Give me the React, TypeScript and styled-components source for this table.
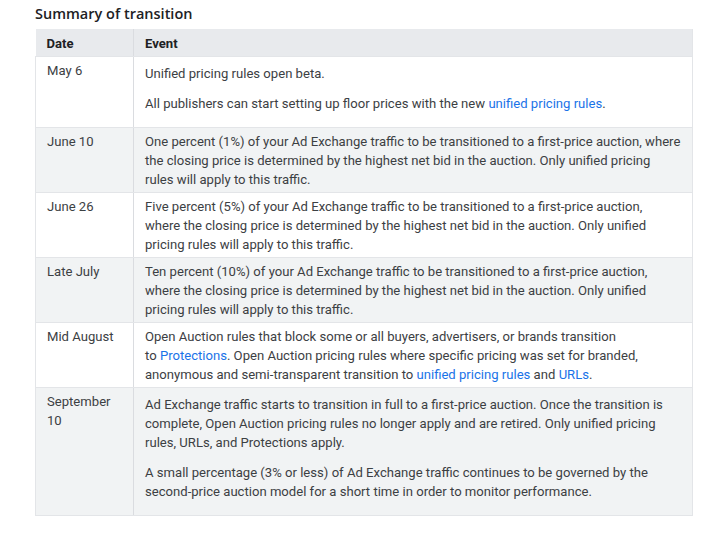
import React from 'react'
import styled, { createGlobalStyle } from 'styled-components'

const GlobalStyle = createGlobalStyle`
  html, body {
    margin: 0;
    padding: 0;
    background: #ffffff;
  }
  body {
    font-family: Roboto, "Liberation Sans", Arial, sans-serif;
    color: #3c4043;
  }
`

const Page = styled.div`
  width: 726px;
  padding: 0 34px 0 35px;
  box-sizing: border-box;
`

const Title = styled.h3`
  margin: 0;
  height: 29px;
  padding-top: 4px;
  box-sizing: border-box;
  font-family: "Open Sans", Roboto, sans-serif;
  font-size: 14.5px;
  font-weight: 600;
  line-height: 20px;
  color: #202124;
`

const Table = styled.table`
  width: 658px;
  border-collapse: collapse;
  table-layout: fixed;
  font-size: 13.1px;
  line-height: 19px;
  border-right: 1px solid #e3e5e8;
`

const HeadCell = styled.th`
  background: #e8eaed;
  color: #202124;
  font-weight: 700;
  text-align: left;
  padding: 5px 11px 3px;
  border-right: 1px solid #dadce0;
  border-bottom: 1px solid #e3e5e8;
  &:last-child {
    border-right: none;
  }
`

const Row = styled.tr`
  background: #ffffff;
  &:nth-child(even) {
    background: #f1f3f4;
  }
`

const DateCell = styled.td`
  vertical-align: top;
  padding: 4px 11px 3px;
  border-right: 1px solid #dadce0;
  border-bottom: 1px solid #e3e5e8;
  border-left: 1px solid #e3e5e8;
  color: #3c4043;
`

const EventCell = styled.td`
  vertical-align: top;
  padding: 4px 10.5px 3px 11px;
  border-bottom: 1px solid #e3e5e8;
  color: #3c4043;
`

const Paragraph = styled.p`
  margin: 0 0 11px;
  &:first-child {
    margin-top: 3px;
  }
`

const Link = styled.a`
  color: #1a73e8;
  text-decoration: none;
`

interface EventRow {
  date: React.ReactNode
  paragraphs: React.ReactNode[]
}

const rows: EventRow[] = [
  {
    date: 'May 6',
    paragraphs: [
      'Unified pricing rules open beta.',
      <>
        All publishers can start setting up floor prices with the new <Link href="#">unified pricing rules</Link>.
      </>,
    ],
  },
  {
    date: 'June 10',
    paragraphs: [
      'One percent (1%) of your Ad Exchange traffic to be transitioned to a first-price auction, where the closing price is determined by the highest net bid in the auction. Only unified pricing rules will apply to this traffic.',
    ],
  },
  {
    date: 'June 26',
    paragraphs: [
      <>
        Five percent (5%) of your Ad Exchange traffic to be transitioned to a first-price auction,
        <br />
        where the closing price is determined by the highest net bid in the auction. Only unified pricing rules will
        apply to this traffic.
      </>,
    ],
  },
  {
    date: 'Late July',
    paragraphs: [
      'Ten percent (10%) of your Ad Exchange traffic to be transitioned to a first-price auction, where the closing price is determined by the highest net bid in the auction. Only unified pricing rules will apply to this traffic.',
    ],
  },
  {
    date: 'Mid August',
    paragraphs: [
      <>
        Open Auction rules that block some or all buyers, advertisers, or brands transition to{'\u00a0'}
        <Link href="#">Protections</Link>. Open Auction pricing rules where specific pricing was set for branded,
        anonymous and semi-transparent transition to <Link href="#">unified pricing rules</Link> and{' '}
        <Link href="#">URLs</Link>.
      </>,
    ],
  },
  {
    date: 'September 10',
    paragraphs: [
      'Ad Exchange traffic starts to transition in full to a first-price auction. Once the transition is complete, Open Auction pricing rules no longer apply and are retired. Only unified pricing rules, URLs, and Protections apply.',
      'A small percentage (3% or less) of Ad Exchange traffic continues to be governed by the second-price auction model for a short time in order to monitor performance.',
    ],
  },
]

const App = () => {
  return (
    <>
      <GlobalStyle />
      <Page>
        <Title>Summary of transition</Title>
        <Table>
          <colgroup>
            <col style={{ width: 98 }} />
            <col />
          </colgroup>
          <thead>
            <tr>
              <HeadCell>Date</HeadCell>
              <HeadCell>Event</HeadCell>
            </tr>
          </thead>
          <tbody>
            {rows.map((row, index) => (
              <Row key={index}>
                <DateCell>{row.date}</DateCell>
                <EventCell>
                  {row.paragraphs.length > 1
                    ? row.paragraphs.map((p, i) => <Paragraph key={i}>{p}</Paragraph>)
                    : row.paragraphs[0]}
                </EventCell>
              </Row>
            ))}
          </tbody>
        </Table>
      </Page>
    </>
  )
}

export default App
